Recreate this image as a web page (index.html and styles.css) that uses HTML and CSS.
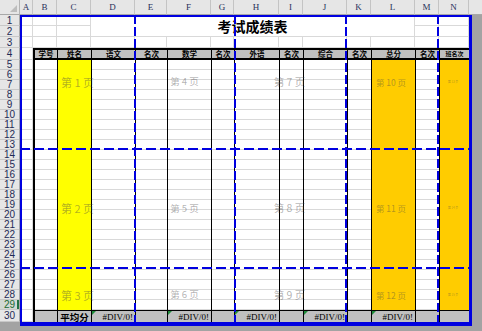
FILE: index.html
```html
<!DOCTYPE html>
<html lang="zh-CN">
<head>
<meta charset="utf-8">
<title>考试成绩表</title>
<link rel="stylesheet" href="styles.css">
</head>
<body>
<div class="screen">
  <div class="sheet">
    <!-- column headers -->
    <div class="corner"></div>
    <div class="ch">A</div><div class="ch">B</div><div class="ch">C</div><div class="ch">D</div>
    <div class="ch">E</div><div class="ch">F</div><div class="ch">G</div><div class="ch">H</div>
    <div class="ch">I</div><div class="ch">J</div><div class="ch">K</div><div class="ch">L</div>
    <div class="ch">M</div><div class="ch">N</div><div class="ch fill"></div>

    <!-- row 1 -->
    <div class="rh">1</div>
    <div class="c"></div><div class="c"></div><div class="c"></div>
    <div class="title">考试成绩表</div>
    <div class="c"></div><div class="c"></div>
    <!-- row 2 -->
    <div class="rh">2</div>
    <div class="c"></div><div class="c"></div><div class="c"></div>
    <div class="c"></div><div class="c"></div>
    <!-- row 3 -->
    <div class="rh">3</div>
    <div class="c"></div><div class="c"></div><div class="c"></div><div class="c"></div>
    <div class="c"></div><div class="c"></div><div class="c"></div><div class="c"></div>
    <div class="c"></div><div class="c"></div><div class="c"></div><div class="c"></div>
    <div class="c"></div><div class="c"></div>
    <!-- row 4 : table header -->
    <div class="rh">4</div>
    <div class="c"></div>
    <div class="th first">学号</div>
    <div class="th">姓名</div>
    <div class="th">语文</div>
    <div class="th">名次</div>
    <div class="th">数学</div>
    <div class="th">名次</div>
    <div class="th">外语</div>
    <div class="th">名次</div>
    <div class="th">综合</div>
    <div class="th">名次</div>
    <div class="th">总分</div>
    <div class="th">名次</div>
    <div class="th small">班名次</div>

    <!-- rows 5-29 -->
    <div class="rh rh-stack">
      <span>5</span><span>6</span><span>7</span><span>8</span><span>9</span>
      <span>10</span><span>11</span><span>12</span><span>13</span><span>14</span>
      <span>15</span><span>16</span><span>17</span><span>18</span><span>19</span>
      <span>20</span><span>21</span><span>22</span><span>23</span><span>24</span>
      <span>25</span><span>26</span><span>27</span><span>28</span><span class="active">29</span>
    </div>
    <div class="b"></div>
    <div class="b t first"></div>
    <div class="b t yellow"></div>
    <div class="b t"></div>
    <div class="b t"></div>
    <div class="b t"></div>
    <div class="b t"></div>
    <div class="b t"></div>
    <div class="b t"></div>
    <div class="b t"></div>
    <div class="b t"></div>
    <div class="b t orange"></div>
    <div class="b t"></div>
    <div class="b t orange"></div>

    <!-- row 30 -->
    <div class="rh">30</div>
    <div class="c"></div>
    <div class="f first"></div>
    <div class="f avg">平均分</div>
    <div class="f err">#DIV/0!</div>
    <div class="f"></div>
    <div class="f err">#DIV/0!</div>
    <div class="f"></div>
    <div class="f err">#DIV/0!</div>
    <div class="f"></div>
    <div class="f err">#DIV/0!</div>
    <div class="f"></div>
    <div class="f err">#DIV/0!</div>
    <div class="f"></div>
    <div class="f"></div>
  </div>

  <!-- page break preview overlays -->
  <div class="pages">
    <div class="pg p1">第 1 页</div><div class="pg p2">第 4 页</div><div class="pg p3">第 7 页</div><div class="pg p4">第 10 页</div><div class="pg p5">第 13 页</div>
    <div class="pg p1">第 2 页</div><div class="pg p2">第 5 页</div><div class="pg p3">第 8 页</div><div class="pg p4">第 11 页</div><div class="pg p5">第 14 页</div>
    <div class="pg p1">第 3 页</div><div class="pg p2">第 6 页</div><div class="pg p3">第 9 页</div><div class="pg p4">第 12 页</div><div class="pg p5">第 15 页</div>
  </div>
  <div class="vdash v1"></div>
  <div class="vdash v2"></div>
  <div class="vdash v3"></div>
  <div class="vdash v4"></div>
  <div class="hdash h1"></div>
  <div class="hdash h2"></div>
  <div class="page-border"></div>
</div>
</body>
</html>
```

FILE: styles.css
```css
* { box-sizing: border-box; margin: 0; padding: 0; }

body {
  margin: 0;
  width: 482px;
  height: 331px;
  overflow: hidden;
  background: #a3a3a3;
  font-family: "Noto Sans CJK SC", "Liberation Sans", sans-serif;
}

.screen {
  position: relative;
  width: 482px;
  height: 331px;
  background: #a3a3a3;
  overflow: hidden;
}

.sheet {
  display: grid;
  grid-template-columns: 20px 13px 24px 34px 44px 32px 44px 23px 45px 24px 44px 24px 44px 24px 30px 13px;
  grid-template-rows: 15px 11px 11px 11px 12px 250px 12px;
}

/* headers */
.corner {
  position: relative;
  background: #e6e6e6;
  border-right: 1px solid #b4b4b4;
  border-bottom: 1px solid #a8a8a8;
}
.corner::after {
  content: "";
  position: absolute;
  right: 2px;
  bottom: 2px;
  border-left: 7px solid transparent;
  border-bottom: 7px solid #bdbdbd;
}

.ch {
  background: #e6e6e6;
  border-right: 1px solid #c4c4c4;
  border-bottom: 1px solid #a8a8a8;
  font: 9px "Liberation Serif", serif;
  color: #28305a;
  display: flex;
  align-items: center;
  justify-content: center;
}
.ch.fill { border-right: none; }

.rh {
  grid-column: 1;
  background: #e6e6e6;
  border-right: 1px solid #a8a8a8;
  border-bottom: 1px solid #c8c8c8;
  font: 10px/9px "Liberation Sans", sans-serif;
  color: #1f2a55;
  display: flex;
  align-items: center;
  justify-content: center;
  overflow: hidden;
}
.rh-stack {
  flex-direction: column;
  align-items: stretch;
  justify-content: flex-start;
  border-bottom: none;
}
.rh-stack span {
  height: 10px;
  display: flex;
  align-items: center;
  justify-content: center;
  border-bottom: 1px solid #c8c8c8;
  overflow: hidden;
}
.rh-stack span.active {
  background: #d2d9d3;
  color: #1c6a34;
  box-shadow: inset -2px 0 0 #217346;
}

/* cells */
.c {
  background: #fff;
  border-right: 1px solid #d9d9d9;
  border-bottom: 1px solid #d9d9d9;
}

.title {
  grid-column: 5 / 14;
  grid-row: span 2;
  background: #fff;
  border-right: 1px solid #d9d9d9;
  border-bottom: 1px solid #d9d9d9;
  display: flex;
  align-items: center;
  justify-content: center;
  font-size: 14px;
  font-weight: 700;
  color: #000;
}

.th {
  background: #c0c0c0;
  border-top: 2px solid #000;
  border-bottom: 2px solid #000;
  border-left: 1px solid #000;
  font-size: 7.5px;
  font-weight: 700;
  color: #000;
  display: flex;
  align-items: center;
  justify-content: center;
  white-space: nowrap;
  line-height: 1;
}
.th.small { font-size: 6px; }

.first { border-left-width: 2px !important; }

.b {
  background-color: #fff;
  background-image: repeating-linear-gradient(to bottom, transparent 0 9px, #d9d9d9 9px 10px);
  border-right: 1px solid #d9d9d9;
}
.b.t {
  border-right: none;
  border-left: 1px solid #000;
}
.b.yellow { background: #ffff00; }
.b.orange { background: #ffcc00; }

.f {
  position: relative;
  background: #c0c0c0;
  border-left: 1px solid #000;
  border-top: 1px solid #000;
  display: flex;
  align-items: center;
  justify-content: flex-end;
  padding-right: 2px;
  font: 9px "Liberation Serif", serif;
  color: #000;
  white-space: nowrap;
}
.f.avg {
  justify-content: center;
  padding-right: 0;
  font: 700 9.5px "Noto Sans CJK SC", sans-serif;
}
.err::before {
  content: "";
  position: absolute;
  left: 0;
  top: 0;
  border-top: 4px solid #1f8b3a;
  border-right: 4px solid transparent;
}

/* page break preview overlays */
.pages {
  position: absolute;
  left: 20px;
  top: 15px;
  width: 449px;
  height: 307px;
  display: grid;
  grid-template-columns: 115px 99px 111px 92px 32px;
  grid-template-rows: 134px 119px 54px;
}
.pg {
  display: flex;
  align-items: center;
  justify-content: center;
  white-space: nowrap;
  color: rgba(70, 70, 70, 0.42);
  font-family: "Noto Sans CJK SC", sans-serif;
  line-height: 1;
}
.p1 { font-size: 11px; }
.p2 { font-size: 9.5px; }
.p3 { font-size: 10.5px; }
.p4 { font-size: 8.5px; }
.p5 { font-size: 3px; }

.vdash {
  position: absolute;
  top: 15px;
  width: 2px;
  height: 307px;
  background: repeating-linear-gradient(to bottom, #0000e0 0 9px, transparent 9px 12px);
}
.v1 { left: 134px; }
.v2 { left: 234px; }
.v3 { left: 345px; }
.v4 { left: 437px; }

.hdash {
  position: absolute;
  left: 20px;
  width: 450px;
  height: 2px;
  background: repeating-linear-gradient(to right, #0000e0 0 10px, transparent 10px 14px);
}
.h1 { top: 148px; }
.h2 { top: 267px; }

.page-border {
  position: absolute;
  left: 20px;
  top: 15px;
  width: 452px;
  height: 311px;
  border: 2px solid #0000e0;
  border-right-width: 3px;
  border-bottom-width: 4px;
}
```
